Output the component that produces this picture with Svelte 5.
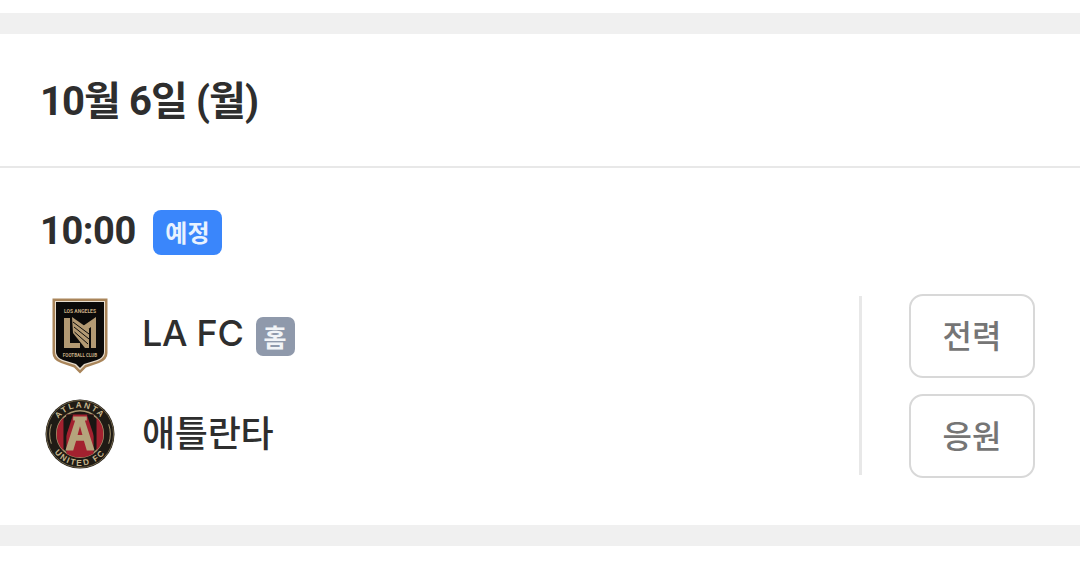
<script>
  const teams = [
    { name: 'LA FC', home: true, logo: 'lafc' },
    { name: '애틀란타', home: false, logo: 'atl' }
  ];
  const actions = ['전력', '응원'];
</script>

<div class="page">
  <div class="band"></div>
  <header class="head"><h1>10월 6일 (월)</h1></header>
  <section class="match">
    <div class="when">
      <span class="time">10:00</span>
      <span class="status">예정</span>
    </div>
    <div class="body">
      <div class="teams">
        {#each teams as t}
          <div class="team">
            <div class="logo">
              {#if t.logo === 'lafc'}
                <svg width="56" height="76" viewBox="0 0 56 76">
                  <path d="M0.500 0.500H55.500V55Q55.500 62 47 65L34 69.500L28 75.500L22 69.500L9 65Q0.500 62 0.500 55Z" fill="#a9855a"/>
                  <path d="M3 3H53V54Q53 60 46 63L33 67L28 72L23 67L10 63Q3 60 3 54Z" fill="#e9dfd0"/>
                  <path d="M4 4H52V54Q52 59 45 62L32 66L28 70L24 66L11 62Q4 59 4 54Z" fill="#0b0a09"/>
                  <text x="28" y="15" class="lt">LOS ANGELES</text>
                  <path d="M12 20H18V45H28V50H12Z" fill="#b39a73"/>
                  <path d="M20 19L37 31V50H33L21 35Z" fill="#b39a73"/>
                  <path d="M44 19V50H39V29L35 32L31 28Z" fill="#b39a73"/>
                  <path d="M21 24L37 36M22 29L37 41M22.500 34L36 46" stroke="#0b0a09" stroke-width="1" fill="none"/>
                  <text x="28" y="59" class="lb">FOOTBALL CLUB</text>
                </svg>
              {:else}
                <svg width="70" height="70" viewBox="0 0 72 72">
                  <defs>
                    <path id="arcTop" d="M9 36A27 27 0 0 1 63 36"/>
                    <path id="arcBot" d="M3.500 36A32.500 32.500 0 0 0 68.500 36"/>
                  </defs>
                  <circle cx="36" cy="36" r="35.500" fill="#1f1b15"/>
                  <circle cx="36" cy="36" r="34.500" fill="none" stroke="#6f6348" stroke-width="1"/>
                  <circle cx="36" cy="36" r="24" fill="#1a1613" stroke="#a8986f" stroke-width="1.500"/>
                  <path d="M12 36A24 24 0 0 1 19 19V53A24 24 0 0 1 12 36Z" fill="#a3212f"/>
                  <path d="M60 36A24 24 0 0 0 53 19V53A24 24 0 0 0 60 36Z" fill="#a3212f"/>
                  <path d="M22 16H50V56Q36 64 22 56Z" fill="#a3212f"/>
                  <path d="M22 16L29 16L21 40V32Z" fill="#1a1613"/>
                  <path d="M50 16L43 16L51 40V32Z" fill="#1a1613"/>
                  <path d="M29 18H43V22H41L51 53H43L40 43H32L29 53H21L31 22H29ZM33.500 37H38.500L36 28Z" fill="#b5a47c" fill-rule="evenodd"/>
                  <path d="M6.500 26A31 31 0 0 0 6.500 46" fill="none" stroke="#a8986f" stroke-width="1"/>
                  <path d="M65.500 26A31 31 0 0 1 65.500 46" fill="none" stroke="#a8986f" stroke-width="1"/>
                  <text class="ct"><textPath href="#arcTop" startOffset="50%">ATLANTA</textPath></text>
                  <text class="ct"><textPath href="#arcBot" startOffset="50%">UNITED FC</textPath></text>
                </svg>
              {/if}
            </div>
            <span class="name">{t.name}</span>
            {#if t.home}<span class="home">홈</span>{/if}
          </div>
        {/each}
      </div>
      <div class="divider"></div>
      <div class="actions">
        {#each actions as a}
          <button class="action">{a}</button>
        {/each}
      </div>
    </div>
  </section>
  <div class="band"></div>
</div>

<style>
  :global(body) {
    margin: 0;
    background: #fff;
  }
  .page {
    padding-top: 13px;
    font-family: Roboto, "Noto Sans CJK KR", sans-serif;
    color: #2e2e2e;
  }
  .band {
    height: 21px;
    background: #f0f0f0;
  }
  .head {
    height: 132px;
    display: flex;
    align-items: center;
    padding: 3px 0 0 40px;
    box-sizing: border-box;
  }
  h1 {
    margin: 0;
    font-size: 40px;
    font-weight: 700;
    letter-spacing: -0.9px;
    line-height: 1;
  }
  .match {
    height: 359px;
    box-sizing: border-box;
    border-top: 2px solid #e8e8e8;
    padding: 42px 45px 0 40px;
  }
  .when {
    display: flex;
    align-items: center;
    gap: 17px;
    height: 45px;
  }
  .time {
    font-size: 38px;
    font-weight: 700;
    letter-spacing: -0.4px;
    padding-bottom: 3px;
  }
  .status {
    width: 69px;
    height: 45px;
    box-sizing: border-box;
    padding-bottom: 3px;
    border-radius: 8px;
    background: #3a86fb;
    color: #e8f2ff;
    font-size: 24px;
    font-weight: 700;
    display: flex;
    align-items: center;
    justify-content: center;
  }
  .body {
    display: flex;
    margin-top: 39px;
  }
  .teams {
    flex: 1;
    display: flex;
    flex-direction: column;
    gap: 22px;
    padding-top: 4px;
  }
  .team {
    display: flex;
    align-items: center;
    height: 76px;
  }
  .logo {
    width: 80px;
    margin-right: 22px;
    display: flex;
    justify-content: center;
    flex-shrink: 0;
  }
  .logo svg {
    display: block;
  }
  .lt, .lb {
    fill: #c9ad85;
    font-size: 5px;
    font-weight: 700;
    text-anchor: middle;
  }
  .lb { font-size: 4.500px; }
  .ct {
    fill: #c7b68d;
    font-size: 8.500px;
    font-weight: 700;
    letter-spacing: 1.800px;
    text-anchor: middle;
    font-family: "Liberation Sans", sans-serif;
  }
  .name {
    font-family: Inter, "Noto Sans CJK KR", sans-serif;
    font-size: 36px;
    font-weight: 500;
    letter-spacing: -0.3px;
    padding-bottom: 6px;
    color: #2e2e2e;
  }
  .home {
    margin-left: 12px;
    width: 39px;
    height: 39px;
    border-radius: 7px;
    background: #8f99ab;
    color: #f2f4f7;
    font-size: 25px;
    font-weight: 700;
    display: flex;
    align-items: center;
    justify-content: center;
  }
  .divider {
    width: 3px;
    height: 179px;
    margin-top: 2px;
    background: #e8e8e8;
    flex-shrink: 0;
  }
  .actions {
    margin-left: 47px;
    display: flex;
    flex-direction: column;
    gap: 16px;
  }
  .action {
    width: 126px;
    height: 84px;
    box-sizing: border-box;
    background: #fff;
    border: 2px solid #d8d8d8;
    border-radius: 14px;
    color: #757575;
    font: 500 32px Roboto, "Noto Sans CJK KR", sans-serif;
    padding: 0 0 5px;
  }
</style>
